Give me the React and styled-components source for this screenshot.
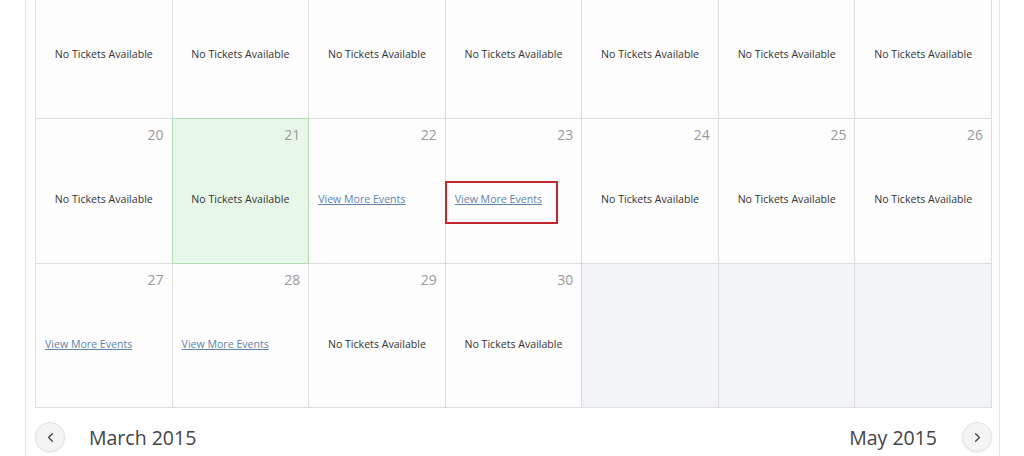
import React from "react";
import styled, { createGlobalStyle } from "styled-components";
import { ChevronLeft, ChevronRight } from "lucide-react";

const GlobalStyle = createGlobalStyle`
  html, body {
    margin: 0;
    padding: 0;
    background: #ffffff;
    font-family: "Open Sans", "Liberation Sans", sans-serif;
    overflow: hidden;
  }
`;

const Panel = styled.div`
  margin-left: 25px;
  width: 975px;
  height: 456px;
  border-left: 1px solid #e4e4e4;
  border-right: 1px solid #e4e4e4;
  padding-left: 9px;
  box-sizing: border-box;
  overflow: hidden;
`;

const Grid = styled.div`
  margin-top: -27px;
  width: 957px;
  display: grid;
  grid-template-columns: repeat(7, 1fr);
  grid-template-rows: 144px 144px 143px;
  gap: 1px;
  background: #dedede;
  border: 1px solid #dedede;
  box-sizing: border-box;
`;

const Cell = styled.div`
  position: relative;
  display: flex;
  flex-direction: column;
  background: ${(p) =>
    p.$today ? "#e8f8e8" : p.$empty ? "#f3f4f7" : "#fdfdfd"};
  ${(p) =>
    p.$today &&
    `
    z-index: 1;
    box-shadow: 0 0 0 1px #b4dcb4;
  `}
`;

const DayNumber = styled.div`
  padding: 6px 8px 0 0;
  height: 20px;
  line-height: 20px;
  text-align: right;
  font-size: 14px;
  color: #9a9a9a;
`;

const Body = styled.div`
  margin-top: 46px;
  line-height: 16px;
  font-size: 10.6px;
  text-align: ${(p) => (p.$link ? "left" : "center")};
  padding-left: ${(p) => (p.$link ? "9px" : "0")};
`;

const Status = styled.span`
  color: #333333;
`;

const MoreLink = styled.a`
  color: #5f83ab;
  text-decoration: underline;
  cursor: pointer;
`;

const Highlight = styled.div`
  position: absolute;
  left: -1px;
  top: 62px;
  width: 113px;
  height: 43px;
  border: 2px solid #c4262e;
  box-sizing: border-box;
  pointer-events: none;
`;

const Nav = styled.div`
  width: 957px;
  margin-top: 14px;
  display: flex;
  align-items: center;
`;

const RoundButton = styled.button`
  width: 30px;
  height: 30px;
  border-radius: 50%;
  border: 1px solid #e2e2e2;
  background: #f4f4f4;
  box-shadow: 0 1px 2px rgba(0, 0, 0, 0.08);
  display: flex;
  align-items: center;
  justify-content: center;
  padding: 0;
  color: #444;
  cursor: pointer;
`;

const MonthLabel = styled.span`
  font-size: 19.5px;
  color: #444444;
  margin: ${(p) => (p.$right ? "0 25px 0 auto" : "0 0 0 24px")};
`;

// first week is scrolled above the view, its day numbers are out of sight
const weeks = [
  Array.from({ length: 7 }, () => ({ day: "" })),
  [
    { day: 20 },
    { day: 21, today: true },
    { day: 22, more: true },
    { day: 23, more: true, marked: true },
    { day: 24 },
    { day: 25 },
    { day: 26 },
  ],
  [
    { day: 27, more: true },
    { day: 28, more: true },
    { day: 29 },
    { day: 30 },
    { empty: true },
    { empty: true },
    { empty: true },
  ],
];

export default function App() {
  return (
    <>
      <GlobalStyle />
      <Panel>
        <Grid>
          {weeks.flat().map((c, i) =>
            c.empty ? (
              <Cell key={i} $empty />
            ) : (
              <Cell key={i} $today={c.today}>
                <DayNumber>{c.day}</DayNumber>
                <Body $link={c.more}>
                  {c.more ? (
                    <MoreLink>View More Events</MoreLink>
                  ) : (
                    <Status>No Tickets Available</Status>
                  )}
                </Body>
                {c.marked && <Highlight />}
              </Cell>
            )
          )}
        </Grid>
        <Nav>
          <RoundButton aria-label="Previous month">
            <ChevronLeft size={15} strokeWidth={2} />
          </RoundButton>
          <MonthLabel>March 2015</MonthLabel>
          <MonthLabel $right>May 2015</MonthLabel>
          <RoundButton aria-label="Next month">
            <ChevronRight size={15} strokeWidth={2} />
          </RoundButton>
        </Nav>
      </Panel>
    </>
  );
}
